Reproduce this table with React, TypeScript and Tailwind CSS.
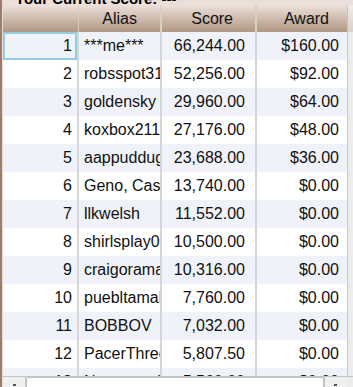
import React from 'react';

type Row = { rank: number; alias: string; score: string; award: string };

const ROWS: Row[] = [
  { rank: 1, alias: '***me***', score: '66,244.00', award: '$160.00' },
  { rank: 2, alias: 'robsspot31', score: '52,256.00', award: '$92.00' },
  { rank: 3, alias: 'goldensky', score: '29,960.00', award: '$64.00' },
  { rank: 4, alias: 'koxbox2119', score: '27,176.00', award: '$48.00' },
  { rank: 5, alias: 'aappuddugs', score: '23,688.00', award: '$36.00' },
  { rank: 6, alias: 'Geno, Casey', score: '13,740.00', award: '$0.00' },
  { rank: 7, alias: 'llkwelsh', score: '11,552.00', award: '$0.00' },
  { rank: 8, alias: 'shirlsplay01', score: '10,500.00', award: '$0.00' },
  { rank: 9, alias: 'craigoramas', score: '10,316.00', award: '$0.00' },
  { rank: 10, alias: 'puebltamale', score: '7,760.00', award: '$0.00' },
  { rank: 11, alias: 'BOBBOV', score: '7,032.00', award: '$0.00' },
  { rank: 12, alias: 'PacerThree', score: '5,807.50', award: '$0.00' },
  { rank: 13, alias: 'Nessmom3', score: '5,560.00', award: '$0.00' },
];

const font = { fontFamily: '"Liberation Sans", Arial, sans-serif' };

const App: React.FC = () => {
  return (
    <div
      className="relative flex w-[353px] h-[387px] overflow-hidden bg-white text-[16px] text-[#111]"
      style={font}
    >
      {/* left frame edge */}
      <div className="w-[2px] shrink-0 bg-[#9a7d6d]" />
      <div className="w-[1px] shrink-0 bg-[#e9ddd6]" />

      <div className="flex flex-col flex-1 min-w-0">
        {/* title, mostly scrolled out of view */}
        <div className="h-[5px] shrink-0 bg-[#ebe0d9] overflow-hidden">
          <div className="pl-[12px] -mt-[10px] leading-[18px] text-[15px] font-bold text-black whitespace-nowrap">
            Your Current Score: ---
          </div>
        </div>

        {/* header */}
        <div className="flex h-[27px] shrink-0 bg-gradient-to-b from-[#ece1da] to-[#b19684]">
          <div className="w-[76px] border-r border-[#d9cabf]" />
          <div className="w-[83px] flex items-center justify-end pr-[23px] border-r-2 border-[#dccfc6]">Alias</div>
          <div className="w-[95px] flex items-center justify-end pr-[22px] border-r-2 border-[#dccfc6]">Score</div>
          <div className="w-[90px] flex items-center justify-end pr-[18px]">Award</div>
          <div className="flex-1 border-l border-[#cdbfb6] bg-gradient-to-b from-[#f1ebe7] to-[#d9cfc8]" />
        </div>

        {/* rows */}
        <div className="flex flex-col">
          {ROWS.map((r, i) => (
            <div
              key={r.rank}
              className={`flex h-[28px] shrink-0 ${i % 2 === 0 ? 'bg-[#eff3f9]' : 'bg-white'}`}
            >
              <div
                className={`w-[76px] flex items-center justify-end pr-[5px] border-r-2 border-[#d6d6d6] ${
                  i === 0 ? 'shadow-[inset_0_0_0_2px_#8fcfe0]' : ''
                }`}
              >
                {r.rank}
              </div>
              <div className="w-[83px] flex items-center pl-[5px] border-r-2 border-[#d6d6d6] overflow-hidden whitespace-nowrap">
                {r.alias}
              </div>
              <div className="w-[95px] flex items-center justify-end pr-[10px] border-r-2 border-[#d6d6d6]">
                {r.score}
              </div>
              <div className="w-[90px] flex items-center justify-end pr-[8px]">{r.award}</div>
              <div className="flex-1 border-l border-[#c9c9c9] bg-[#ededed]" />
            </div>
          ))}
        </div>
      </div>

      {/* horizontal scrollbar overlaying the table */}
      <div className="absolute left-[3px] right-0 bottom-0 h-[11px] flex border-t border-[#c4c4c4] bg-[#f0f0f0]">
        <div className="w-[23px] flex items-end justify-center border-r border-[#c8c8c8]">
          <div className="w-[3px] h-[2px] mb-[1px] bg-[#555]" />
        </div>
        <div className="w-[298px] bg-white border border-b-0 border-[#bdbdbd] rounded-t-[2px]" />
        <div className="w-[22px] flex items-end justify-center border-l border-[#c8c8c8]">
          <div className="w-[3px] h-[2px] mb-[1px] bg-[#555]" />
        </div>
        <div className="flex-1 bg-[#ededed]" />
      </div>
    </div>
  );
};

export default App;
